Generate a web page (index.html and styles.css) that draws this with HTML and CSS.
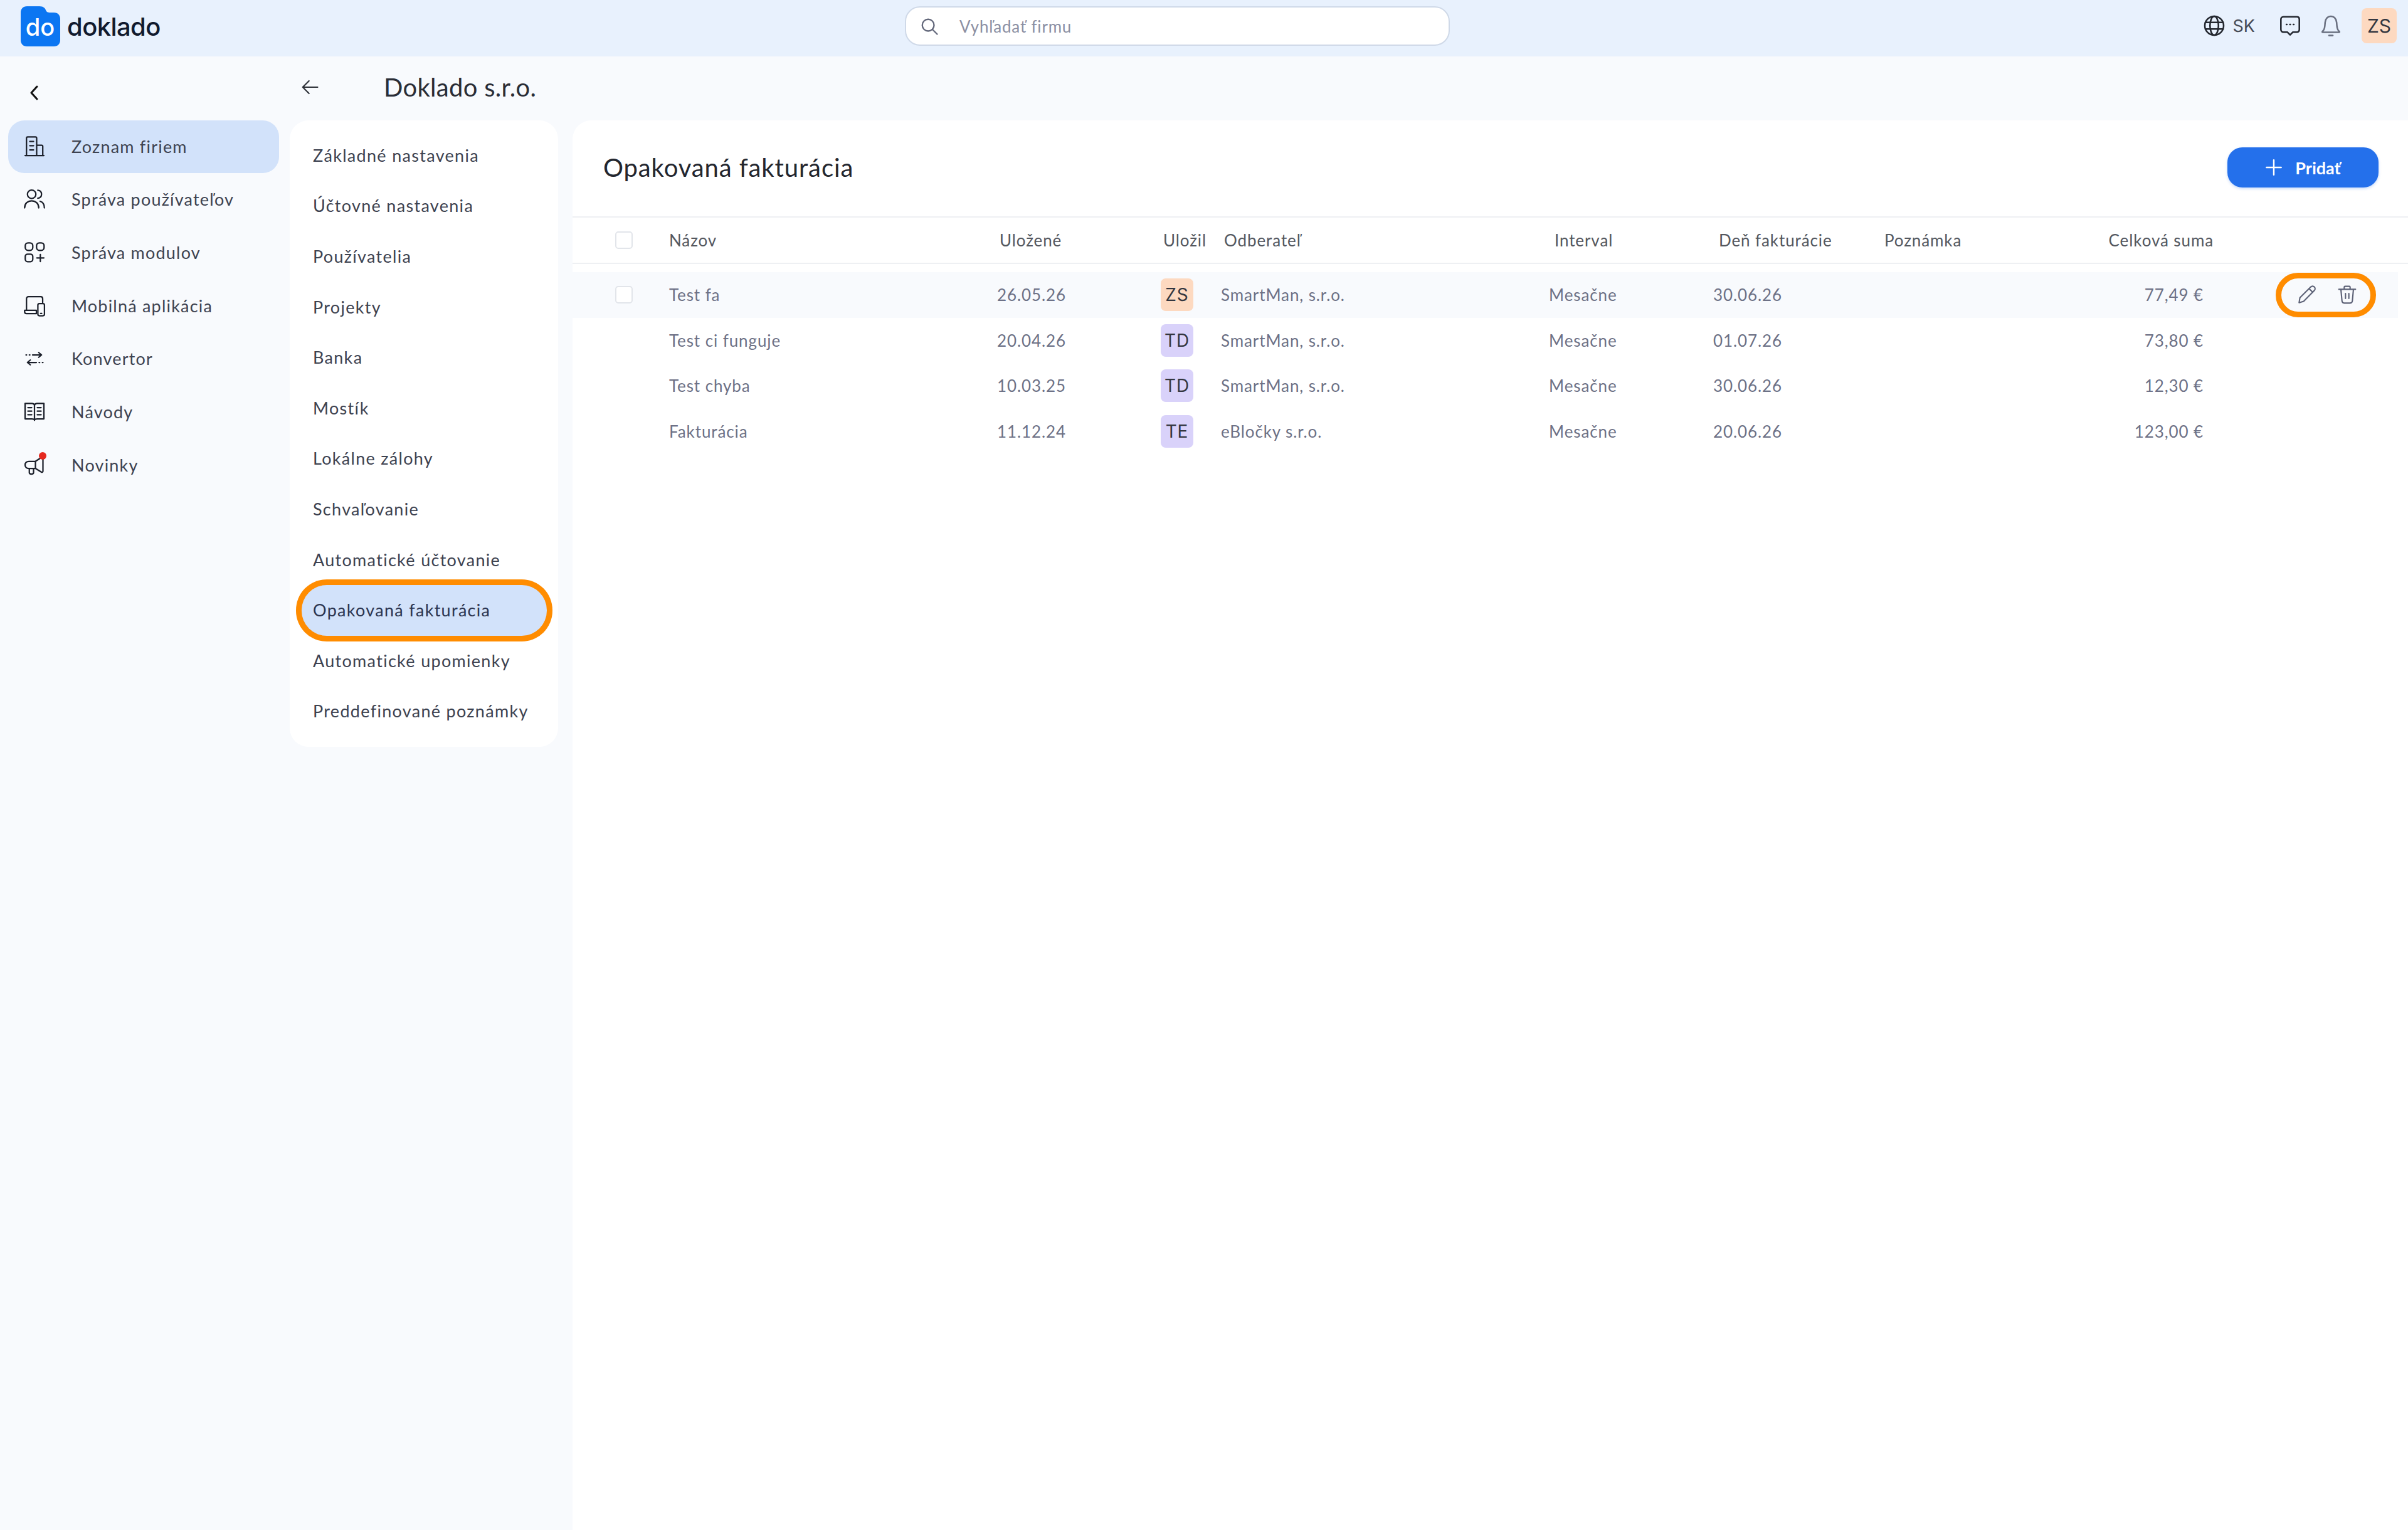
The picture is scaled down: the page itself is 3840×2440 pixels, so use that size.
FILE: index.html
```html
<!DOCTYPE html>
<html lang="sk">
<head>
<meta charset="UTF-8">
<meta name="viewport" content="width=device-width, initial-scale=1.0">
<title>Opakovaná fakturácia</title>
<link rel="stylesheet" href="styles.css">
</head>
<body>

<!-- Top bar -->
<header class="topbar">
  <div class="brand">
    <svg class="brand-mark" viewBox="0 0 63 64">
      <path d="M10 0H30C36 0 39 3 40 6C41 9 43 10 47 10H53C59 10 63 14 63 20V54C63 60 59 64 53 64H10C4 64 0 60 0 54V10C0 4 4 0 10 0Z" fill="#0b76f2"/>
      <text x="31" y="47" text-anchor="middle" class="brand-do">do</text>
    </svg>
    <span class="brand-name">doklado</span>
  </div>

  <div class="search">
    <svg class="search-icon" viewBox="0 0 24 24"><circle cx="10.5" cy="10.5" r="7.500"/><path d="M16 16L22 22"/></svg>
    <span class="search-text">Vyhľadať firmu</span>
  </div>

  <div class="top-actions">
    <svg class="top-icon globe" viewBox="0 0 24 24"><circle cx="12" cy="12" r="10"/><ellipse cx="12" cy="12" rx="4.5" ry="10"/><path d="M2.6 8.5H21.4M2.6 15.5H21.4"/></svg>
    <span class="lang">SK</span>
    <svg class="top-icon chat" viewBox="0 0 24 24"><path d="M5 2.5H19C20.7 2.5 21.8 3.6 21.8 5.3V16C21.8 17.7 20.7 18.8 19 18.8H15L12 21.8L9 18.8H5C3.3 18.8 2.2 17.7 2.2 16V5.3C2.2 3.6 3.3 2.5 5 2.5Z"/><path class="dots" d="M8 10.7H8.6M11.7 10.7H12.3M15.4 10.7H16"/></svg>
    <svg class="top-icon bell" viewBox="0 0 24 24"><path d="M3 18.2C4.8 16.6 5.4 15 5.6 12L5.9 8.4C6.2 4.7 8.7 2 12 2C15.3 2 17.8 4.7 18.1 8.4L18.4 12C18.6 15 19.2 16.6 21 18.2C21.4 18.6 21.2 19 20.6 19H3.4C2.8 19 2.6 18.6 3 18.2Z"/><path d="M10 22.4H14"/></svg>
    <span class="badge badge-orange top-badge">ZS</span>
  </div>
</header>

<div class="layout">

  <!-- Main navigation -->
  <aside class="sidebar">
    <div class="collapse-row">
      <svg class="chevron" viewBox="0 0 14 24"><path d="M12 2L3 12L12 22"/></svg>
    </div>
    <nav class="nav">
      <a class="nav-item active">
        <svg class="nav-icon" viewBox="0 0 24 24"><path d="M2 22H22M3.5 22V3.5C3.5 2.7 4 2.2 4.8 2.2H13C13.8 2.2 14.3 2.7 14.3 3.5V22M14.3 11H19.5C20.3 11 20.8 11.5 20.8 12.3V22M7 7H11M7 11.5H11M7 16H11"/></svg>
        <span>Zoznam firiem</span>
      </a>
      <a class="nav-item">
        <svg class="nav-icon" viewBox="0 0 24 24"><circle cx="9" cy="6.5" r="4.5"/><path d="M1.5 21C1.5 16.5 4.5 13.6 9 13.6C13.5 13.6 16.5 16.5 16.5 21M15.5 2.3C18 2.6 19.5 4.3 19.5 6.5C19.5 8.7 18 10.4 15.5 10.7M18 14C20.8 14.8 22.5 17.3 22.5 21"/></svg>
        <span>Správa používateľov</span>
      </a>
      <a class="nav-item">
        <svg class="nav-icon" viewBox="0 0 24 24"><rect x="2.2" y="2.2" width="8" height="8" rx="3"/><rect x="14.2" y="2.2" width="8" height="8" rx="3"/><rect x="2.2" y="14.2" width="8" height="8" rx="2.5"/><path d="M18.2 14.5V22M14.5 18.2H22"/></svg>
        <span>Správa modulov</span>
      </a>
      <a class="nav-item">
        <svg class="nav-icon" viewBox="0 0 24 24"><path d="M3.5 17V5C3.5 3.6 4.3 2.8 5.7 2.8H18.5C19.9 2.8 20.7 3.6 20.7 5V9M1.5 17.3H14V20.8H3.5C2.3 20.8 1.5 20 1.5 18.8Z"/><rect x="15.6" y="10" width="7" height="13" rx="1.6"/><path d="M18.5 20.5H19.7"/></svg>
        <span>Mobilná aplikácia</span>
      </a>
      <a class="nav-item">
        <svg class="nav-icon" viewBox="0 0 24 24"><path d="M3 8H3.6M6.5 8H7.100M10 8H19M16.500 5.500L19.500 8L16.500 10.500M21 16H20.400M17.500 16H16.900M14 16H5M7.500 13.500L4.500 16L7.500 18.500"/></svg>
        <span>Konvertor</span>
      </a>
      <a class="nav-item">
        <svg class="nav-icon" viewBox="0 0 24 24"><path d="M2 3.500H9C10.800 3.500 12 4.500 12 6V21.500C12 20.300 10.800 20 9 20H2ZM22 3.500H15C13.200 3.500 12 4.500 12 6V21.500C12 20.300 13.200 20 15 20H22ZM5 8H9M5 11.800H9M5 15.600H9M15 8H19M15 11.800H19M15 15.600H19"/></svg>
        <span>Návody</span>
      </a>
      <a class="nav-item">
        <span class="nav-icon-wrap">
          <svg class="nav-icon" viewBox="0 0 24 24"><path d="M21 5V19C21 20 20 20.300 19.200 19.800L13 16H6C3.500 16 2 14.300 2 12.300C2 10.200 3.500 8.500 6 8.500H13L19.200 4.500C20 4 21 4 21 5ZM13 8.500V16M6.500 16V20.500C6.500 22.500 11 22.500 11 20.500V16"/></svg>
          <span class="dot"></span>
        </span>
        <span>Novinky</span>
      </a>
    </nav>
  </aside>

  <!-- Company settings -->
  <section class="settings">
    <div class="company-row">
      <svg class="back-arrow" viewBox="0 0 24 24"><path d="M22 12H3M11 4L3 12L11 20"/></svg>
      <h1 class="company-name">Doklado s.r.o.</h1>
    </div>
    <ul class="settings-menu">
      <li>Základné nastavenia</li>
      <li>Účtovné nastavenia</li>
      <li>Používatelia</li>
      <li>Projekty</li>
      <li>Banka</li>
      <li>Mostík</li>
      <li>Lokálne zálohy</li>
      <li>Schvaľovanie</li>
      <li>Automatické účtovanie</li>
      <li class="current">Opakovaná fakturácia</li>
      <li>Automatické upomienky</li>
      <li>Preddefinované poznámky</li>
    </ul>
  </section>

  <!-- Content -->
  <main class="content">
    <div class="content-head">
      <h2 class="content-title">Opakovaná fakturácia</h2>
      <button class="add-button">
        <svg class="plus" viewBox="0 0 24 24"><path d="M12 2V22M2 12H22"/></svg>
        <span>Pridať</span>
      </button>
    </div>

    <div class="table-row table-head">
      <div><span class="checkbox"></span></div>
      <div>Názov</div>
      <div>Uložené</div>
      <div>Uložil</div>
      <div>Odberateľ</div>
      <div>Interval</div>
      <div>Deň fakturácie</div>
      <div>Poznámka</div>
      <div class="amount">Celková suma</div>
    </div>

    <div class="table-body">
      <div class="table-row hovered">
        <div><span class="checkbox"></span></div>
        <div>Test fa</div>
        <div>26.05.26</div>
        <div><span class="badge badge-orange">ZS</span></div>
        <div>SmartMan, s.r.o.</div>
        <div>Mesačne</div>
        <div>30.06.26</div>
        <div></div>
        <div class="amount">77,49 €</div>
        <div class="row-actions">
          <svg class="action-icon" viewBox="0 0 24 24"><path d="M2.500 21.500L3.500 15.500L16.500 2.700C17.700 1.600 19.500 1.600 20.700 2.700C21.900 3.900 21.900 5.700 20.700 6.900L8 19.800Z"/><path d="M14.500 4.800L18.800 9"/></svg>
          <svg class="action-icon" viewBox="0 0 24 24"><path d="M2 5.500H22M8.500 5.500V3C8.500 2.300 9 2 9.500 2H14.500C15 2 15.500 2.300 15.500 3V5.500M4.500 5.500L5.800 19.500C6 21.200 7 22 8.500 22H15.500C17 22 18 21.200 18.200 19.500L19.500 5.500M10 10.500V16.500M14 10.500V16.500"/></svg>
        </div>
      </div>
      <div class="table-row">
        <div></div>
        <div>Test ci funguje</div>
        <div>20.04.26</div>
        <div><span class="badge badge-violet">TD</span></div>
        <div>SmartMan, s.r.o.</div>
        <div>Mesačne</div>
        <div>01.07.26</div>
        <div></div>
        <div class="amount">73,80 €</div>
      </div>
      <div class="table-row">
        <div></div>
        <div>Test chyba</div>
        <div>10.03.25</div>
        <div><span class="badge badge-violet">TD</span></div>
        <div>SmartMan, s.r.o.</div>
        <div>Mesačne</div>
        <div>30.06.26</div>
        <div></div>
        <div class="amount">12,30 €</div>
      </div>
      <div class="table-row">
        <div></div>
        <div>Fakturácia</div>
        <div>11.12.24</div>
        <div><span class="badge badge-violet">TE</span></div>
        <div>eBločky s.r.o.</div>
        <div>Mesačne</div>
        <div>20.06.26</div>
        <div></div>
        <div class="amount">123,00 €</div>
      </div>
    </div>
  </main>

</div>

</body>
</html>
```

FILE: styles.css
```css
* {
  box-sizing: border-box;
}

html, body {
  margin: 0;
  padding: 0;
  height: 100%;
}

body {
  display: flex;
  flex-direction: column;
  font-family: "Lato", "Liberation Sans", sans-serif;
  background-color: #f8fafd;
  color: #3d4250;
  overflow: hidden;
}

svg {
  fill: none;
  stroke: currentColor;
  stroke-linecap: round;
  stroke-linejoin: round;
  flex-shrink: 0;
}

/* Top bar */
.topbar {
  position: relative;
  display: flex;
  align-items: center;
  justify-content: space-between;
  height: 90px;
  flex-shrink: 0;
  padding: 0 18px 0 33px;
  background-color: #e8f1fd;
}

.brand {
  display: flex;
  align-items: center;
  gap: 11px;
}

.brand-mark {
  width: 63px;
  height: 64px;
  stroke: none;
  margin-top: -6px;
}

.brand-do {
  font-family: "Inter", sans-serif;
  font-size: 38px;
  font-weight: 500;
  fill: #fff;
}

.brand-name {
  font-family: "Inter", sans-serif;
  font-size: 40px;
  font-weight: 500;
  letter-spacing: -0.6px;
  color: #111a2e;
  margin-top: -6px;
}

.search {
  position: absolute;
  left: 1443px;
  top: 10px;
  display: flex;
  align-items: center;
  width: 869px;
  height: 63px;
  padding-left: 22px;
  background-color: #fff;
  border: 2px solid #cfd9e8;
  border-radius: 24px;
}

.search-icon {
  width: 30px;
  height: 30px;
  stroke-width: 1.9;
  color: #62677a;
}

.search-text {
  margin-left: 33px;
  font-size: 26px;
  letter-spacing: 0.8px;
  color: #8b8fa3;
}

.top-actions {
  display: flex;
  align-items: center;
  margin-top: -8px;
}

.top-icon {
  width: 36px;
  height: 36px;
  stroke-width: 1.7;
  color: #23272f;
}

.lang {
  margin-left: 12px;
  margin-right: 38px;
  font-family: "Inter", sans-serif;
  font-size: 27px;
  color: #454a55;
}

.chat {
  margin-right: 29px;
}

.dots {
  stroke-width: 1.6;
}

.bell {
  margin-right: 31px;
  color: #6a7080;
}

.badge {
  display: flex;
  align-items: center;
  justify-content: center;
  width: 52px;
  height: 52px;
  border-radius: 8px;
  font-family: "Inter", sans-serif;
  font-size: 28px;
  color: #33363f;
}

.badge-orange {
  background-color: #fdd9c0;
}

.badge-violet {
  background-color: #d9d2fa;
}

.top-badge {
  width: 56px;
  height: 56px;
  font-size: 30px;
}

/* Page columns */
.layout {
  display: flex;
  flex: 1;
  min-height: 0;
}

/* Sidebar */
.sidebar {
  width: 462px;
  flex-shrink: 0;
  padding: 0 17px 0 13px;
}

.collapse-row {
  display: flex;
  align-items: center;
  height: 102px;
  padding: 14px 0 0 34px;
}

.chevron {
  width: 14px;
  height: 24px;
  stroke-width: 3;
  color: #111;
}

.nav {
  display: flex;
  flex-direction: column;
  gap: 0.7px;
}

.nav-item {
  display: flex;
  align-items: center;
  gap: 41.5px;
  height: 84px;
  padding: 0 0 2px 23.5px;
  border-radius: 26px;
  font-size: 27px;
  letter-spacing: 1.2px;
}

.nav-item.active {
  background-color: #d2e2fa;
}

.nav-icon {
  display: block;
  width: 36px;
  height: 36px;
  stroke-width: 1.5;
  color: #1b1f2a;
}

.nav-icon-wrap {
  position: relative;
  display: block;
  width: 36px;
  height: 36px;
}

.dot {
  position: absolute;
  top: -2px;
  right: -1.5px;
  width: 12px;
  height: 12px;
  border-radius: 50%;
  background-color: #e5281f;
}

/* Settings menu */
.settings {
  width: 428px;
  flex-shrink: 0;
}

.company-row {
  display: flex;
  align-items: center;
  height: 102px;
  padding: 0 0 4px 17px;
}

.back-arrow {
  width: 30px;
  height: 30px;
  stroke-width: 1.7;
  color: #2d3038;
}

.company-name {
  margin: 0 0 0 103px;
  font-size: 40px;
  font-weight: 400;
  letter-spacing: 0.3px;
  color: #2a2d36;
}

.settings-menu {
  list-style: none;
  margin: 0;
  padding: 16px 18px 16px 19px;
  background-color: #fff;
  border-radius: 30px;
}

.settings-menu li {
  display: flex;
  align-items: center;
  height: 80.6px;
  padding: 0 0 2px 18px;
  font-size: 27px;
  letter-spacing: 1.3px;
}

.settings-menu li.current {
  background-color: #d2e2fa;
  border-radius: 40px;
  box-shadow: 0 0 0 9px #ff8c00;
  color: #2c3550;
}

/* Content panel */
.content {
  flex: 1;
  margin: 102px 0 0 23px;
  background-color: #fff;
  border-top-left-radius: 30px;
}

.content-head {
  display: flex;
  align-items: center;
  justify-content: space-between;
  height: 155px;
  padding: 0 47px 3px 49px;
  border-bottom: 2px solid #eef0f3;
}

.content-title {
  margin: 0;
  font-size: 40px;
  font-weight: 400;
  letter-spacing: 0.9px;
  color: #23262e;
}

.add-button {
  display: flex;
  align-items: center;
  justify-content: center;
  gap: 20px;
  width: 241px;
  height: 64px;
  border: none;
  border-radius: 24px;
  background-color: #2470eb;
  box-shadow: 0 2px 4px rgba(36, 112, 235, 0.25);
  font-family: inherit;
  font-size: 27px;
  font-weight: 700;
  color: #fff;
}

.plus {
  width: 28px;
  height: 28px;
  stroke-width: 2.1;
}

/* Table */
.table-row {
  display: grid;
  grid-template-columns: 154px 523px 261px 96px 523px 262px 268px 300px 214px 1fr;
  align-items: center;
  height: 72.6px;
  margin-right: 16px;
  font-size: 26px;
  letter-spacing: 0.9px;
  color: #6d7186;
}

.table-head {
  height: 74px;
  margin-right: 0;
  border-bottom: 2px solid #eef0f3;
  color: #54585f;
}

.table-head > div:nth-child(3),
.table-head > div:nth-child(4) {
  padding-left: 4px;
}

.table-head > div:nth-child(5),
.table-head > div:nth-child(8) {
  padding-left: 5px;
}

.table-head > div:nth-child(6),
.table-head > div:nth-child(7) {
  padding-left: 9px;
}

.table-head .amount {
  margin-right: -16px;
}

.table-body {
  padding-top: 13px;
}

.hovered {
  background-color: #f8fafd;
}

.amount {
  text-align: right;
  white-space: nowrap;
}

.checkbox {
  display: block;
  width: 28px;
  height: 28px;
  margin-left: 68px;
  background-color: #fff;
  border: 2px solid #e2e5ea;
  border-radius: 5px;
}

.row-actions {
  justify-self: end;
  display: flex;
  align-items: center;
  justify-content: center;
  gap: 32px;
  width: 160px;
  height: 71px;
  margin-right: 35px;
  padding-left: 4px;
  border: 9px solid #ff8c00;
  border-radius: 36px;
}

.action-icon {
  width: 32px;
  height: 32px;
  stroke-width: 1.6;
  color: #5d6277;
}
```
